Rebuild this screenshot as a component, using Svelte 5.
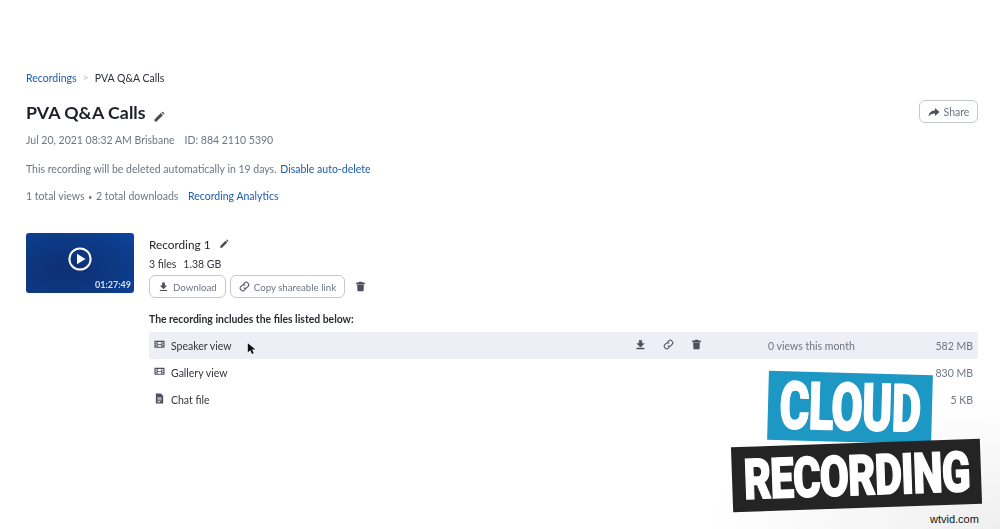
<script>
	const files = [
		{ name: 'Speaker view', icon: 'film', size: '582 MB', views: '0 views this month', active: true },
		{ name: 'Gallery view', icon: 'film', size: '830 MB' },
		{ name: 'Chat file', icon: 'doc', size: '5 KB' }
	];
</script>

{#snippet pencil(cls)}
	<svg class={cls} viewBox="0 0 24 24"><path d="M3 21v-4.200L15.600 4.200l4.200 4.200L7.200 21zM17 2.800l1-1c.6-.6 1.400-.6 2 0l2.200 2.200c.6.6.6 1.400 0 2l-1 1z" /></svg>
{/snippet}
{#snippet download(cls)}
	<svg class={cls} viewBox="0 0 24 24"><path d="M9 3h6v7h5l-8 8-8-8h5zM4 19.500h16V22H4z" /></svg>
{/snippet}
{#snippet link(cls)}
	<svg class={cls} viewBox="0 0 24 24"><path class="line" d="M10 6.500l2.500-2.500a4.600 4.600 0 0 1 6.500 0l1 1a4.600 4.600 0 0 1 0 6.500l-3 3a4.600 4.600 0 0 1-6.500 0M14 17.500L11.500 20a4.600 4.600 0 0 1-6.500 0l-1-1a4.600 4.600 0 0 1 0-6.500l3-3a4.600 4.600 0 0 1 6.500 0" /></svg>
{/snippet}
{#snippet trash(cls)}
	<svg class={cls} viewBox="0 0 24 24"><path d="M9 2h6l1 2h5v2.500H3V4h5zM5 8h14l-1 14H6z" /></svg>
{/snippet}
{#snippet film()}
	<svg class="type" viewBox="0 0 24 24"><path fill-rule="evenodd" d="M1 4h22v15H1zM3.500 6.500v2.500H6V6.500zM3.500 10.500v2.500H6v-2.500zM3.500 14.500V17H6v-2.500zM18 6.500v2.500h2.500V6.500zM18 10.500v2.500h2.500v-2.500zM18 14.500V17h2.500v-2.500zM8 6.500v4.500h8V6.500zM8 12.500V17h8v-4.500z" /></svg>
{/snippet}
{#snippet doc()}
	<svg class="type" viewBox="0 0 24 24"><path fill-rule="evenodd" d="M4 1h11l5 5v17H4zM7.500 10v2h9v-2zM7.500 14v2h9v-2zM7.500 18v2h6v-2z" /></svg>
{/snippet}

<main class="page">
	<nav class="crumbs">
		<a href="#recordings">Recordings</a>
		<span class="sep">&gt;</span>
		<span>PVA Q&amp;A Calls</span>
	</nav>

	<header class="head">
		<div>
			<h1>PVA Q&amp;A Calls {@render pencil('title-pen')}</h1>
			<p class="meta"><span>Jul 20, 2021 08:32 AM Brisbane</span><span>ID: 884 2110 5390</span></p>
		</div>
		<button class="btn share">
			<svg class="ico" viewBox="0 0 24 24"><path d="M14 4l9 8-9 8v-5C8 15 4 17 1 21c1-7 5-12 13-12z" /></svg>
			Share
		</button>
	</header>

	<p class="notice">This recording will be deleted automatically in 19 days. <a href="#disable">Disable auto-delete</a></p>
	<p class="stats">1 total views <i>•</i> 2 total downloads <a href="#analytics">Recording Analytics</a></p>

	<section class="recording">
		<div class="thumb">
			<svg class="play" viewBox="0 0 24 24"><circle cx="12" cy="12" r="10.600" fill="none" stroke="#fff" stroke-width="2" /><path d="M9 6.800l8.500 5.200L9 17.200z" fill="#fff" /></svg>
			<span class="time">01:27:49</span>
		</div>
		<div class="detail">
			<h2>Recording 1 {@render pencil('rec-pen')}</h2>
			<p class="size"><span>3 files</span><span>1.38 GB</span></p>
			<div class="actions">
				<button class="btn">{@render download('ico')} Download</button>
				<button class="btn">{@render link('ico')} Copy shareable link</button>
				{@render trash('row-ico del')}
			</div>
			<p class="includes">The recording includes the files listed below:</p>
			<ul class="files">
				{#each files as f}
					<li class:active={f.active}>
						{#if f.icon === 'film'}{@render film()}{:else}{@render doc()}{/if}
						<span class="name">{f.name}</span>
						{#if f.active}
							<span class="tools">
								{@render download('row-ico')}
								{@render link('row-ico')}
								{@render trash('row-ico')}
							</span>
							<span class="views">{f.views}</span>
						{/if}
						<span class="bytes">{f.size}</span>
					</li>
				{/each}
			</ul>
		</div>
	</section>
</main>

<!-- cursor and video caption sit over the page -->
<svg class="cursor" viewBox="0 0 12 16"><path d="M1 1v11l3-2.500 2 4.500 2-1-2-4.500h4z" fill="#111" /></svg>
<div class="fade"></div>
<div class="caption">
	<div class="blue"><span>CLOUD</span></div>
	<div class="black"><span>RECORDING</span></div>
</div>
<span class="mark">wtvid.com</span>

<style>
	:global(body) {
		background: #fff;
		overflow: hidden;
	}

	.page {
		box-sizing: border-box;
		width: 1000px;
		height: 529px;
		padding: 71px 22px 0 26px;
		font-family: Lato, sans-serif;
		font-size: 10.500px;
		line-height: 14px;
		color: #6e7680;
		filter: blur(0.35px);
	}

	a {
		color: #1c5bb0;
		text-decoration: none;
	}

	p {
		margin: 0;
	}

	.crumbs {
		display: flex;
		gap: 6.500px;
		color: #2a2f36;
	}

	.sep {
		color: #b5b9c0;
		font-size: 9px;
	}

	.head {
		display: flex;
		justify-content: space-between;
		align-items: flex-start;
		margin-top: 15px;
	}

	h1 {
		margin: 0;
		font-size: 17.800px;
		line-height: 24px;
		font-weight: 700;
		color: #1d2026;
	}

	.title-pen {
		width: 12px;
		height: 12px;
		margin-left: 3px;
		vertical-align: -4px;
		fill: #4a4d55;
	}

	.meta {
		display: flex;
		gap: 10px;
		margin-top: 9px;
	}

	.btn {
		display: inline-flex;
		align-items: center;
		gap: 4px;
		box-sizing: border-box;
		height: 23px;
		padding: 0 8px;
		background: #fff;
		border: 1px solid #c4c7ce;
		border-radius: 6px;
		font: inherit;
		font-size: 9.700px;
		color: #6e7680;
	}

	.share {
		width: 59px;
		justify-content: center;
		padding: 0;
		font-size: 10.500px;
	}

	.ico {
		width: 11px;
		height: 11px;
		fill: #4d505a;
		stroke: #4d505a;
		stroke-width: 0;
	}

	.share .ico {
		width: 12px;
		height: 12px;
	}

	.line {
		fill: none;
		stroke-width: 2.200;
	}

	.notice {
		margin-top: 15px;
	}

	.notice a {
		margin-left: 1px;
	}

	.stats {
		margin-top: 13px;
	}

	.stats i {
		font-style: normal;
		font-size: 7px;
		margin: 0 1px;
	}

	.stats a {
		margin-left: 7px;
	}

	.recording {
		display: flex;
		gap: 15px;
		margin-top: 29px;
	}

	.thumb {
		position: relative;
		display: flex;
		align-items: center;
		justify-content: center;
		flex: none;
		width: 108px;
		height: 60px;
		border-radius: 3px;
		background: radial-gradient(ellipse at 35% 60%, #0e2f74 0%, #0d3a86 60%, #0b46a0 100%);
	}

	.play {
		width: 24px;
		height: 24px;
		margin-top: -9px;
	}

	.time {
		position: absolute;
		right: 3px;
		bottom: 1px;
		font-size: 9px;
		font-weight: 700;
		color: #d5deec;
	}

	.detail {
		flex: 1;
		min-width: 0;
	}

	h2 {
		margin: 4px 0 0;
		font-size: 11.800px;
		line-height: 16px;
		font-weight: 400;
		color: #23262c;
	}

	.rec-pen {
		width: 10px;
		height: 10px;
		margin-left: 5px;
		fill: #4a4d55;
	}

	.size {
		display: flex;
		gap: 7px;
		margin-top: 4px;
		color: #33363d;
	}

	.actions {
		display: flex;
		align-items: center;
		gap: 4px;
		margin-top: 4px;
	}

	.row-ico {
		width: 11px;
		height: 11px;
		fill: #4d505a;
		stroke: #4d505a;
	}

	.del {
		margin-left: 6px;
	}

	.includes {
		margin-top: 14px;
		font-weight: 700;
		font-size: 10.400px;
		color: #2a2d34;
	}

	.files {
		list-style: none;
		margin: 6px 0 0;
		padding: 0;
	}

	.files li {
		display: flex;
		align-items: center;
		height: 27px;
		padding: 0 5px;
		color: #33363d;
	}

	.files li.active {
		background: #eeeef6;
		border-radius: 2px;
	}

	.type {
		flex: none;
		width: 11px;
		height: 11px;
		margin-top: -3px;
		fill: #4d505a;
	}

	.name {
		flex: 1;
		margin-left: 6px;
		padding-top: 1px;
	}

	.tools {
		display: flex;
		gap: 17px;
	}

	.tools :global(svg) {
		margin-top: -2px;
	}

	.views {
		width: 90px;
		margin-left: 66px;
		padding-top: 1px;
		color: #6e7680;
	}

	.bytes {
		width: 115px;
		padding-top: 1px;
		text-align: right;
		color: #6e7680;
	}

	.cursor {
		position: absolute;
		left: 247px;
		top: 342px;
		width: 10px;
		height: 14px;
	}

	.fade {
		position: absolute;
		left: 700px;
		top: 400px;
		width: 300px;
		height: 129px;
		background: radial-gradient(ellipse at 100% 100%, #efefef 0%, rgba(255, 255, 255, 0) 70%);
	}

	.caption {
		position: absolute;
		inset: 0;
		font-family: Roboto, "Liberation Sans", sans-serif;
		font-weight: 900;
		color: #fff;
		pointer-events: none;
		overflow: hidden;
	}

	.blue,
	.black {
		position: absolute;
		display: flex;
		align-items: center;
		justify-content: center;
	}

	.blue {
		left: 768px;
		top: 373px;
		width: 164px;
		height: 69px;
		background: #1d97c4;
		transform: rotate(1.5deg);
	}

	.black {
		left: 732px;
		top: 443px;
		width: 249px;
		height: 65px;
		background: #242424;
		transform: rotate(-2deg);
	}

	.blue span,
	.black span {
		flex: none;
		white-space: nowrap;
		-webkit-text-stroke: 1.500px #fff;
	}

	.blue span {
		font-size: 66px;
		letter-spacing: -1px;
		transform: scaleX(0.69);
	}

	.black span {
		font-size: 56px;
		letter-spacing: -1px;
		transform: scaleX(0.75);
	}

	.mark {
		position: absolute;
		left: 930px;
		top: 511px;
		font-family: "Liberation Sans", sans-serif;
		font-size: 11px;
		line-height: 16px;
		color: #111;
	}
</style>
